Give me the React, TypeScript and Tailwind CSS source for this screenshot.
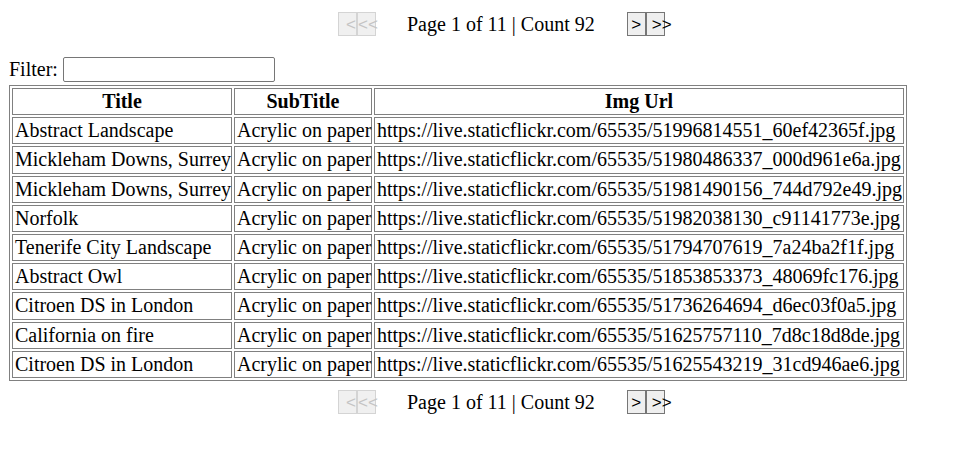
const rows = [
  ['Abstract Landscape', 'Acrylic on paper', 'https://live.staticflickr.com/65535/51996814551_60ef42365f.jpg'],
  ['Mickleham Downs, Surrey', 'Acrylic on paper', 'https://live.staticflickr.com/65535/51980486337_000d961e6a.jpg'],
  ['Mickleham Downs, Surrey', 'Acrylic on paper', 'https://live.staticflickr.com/65535/51981490156_744d792e49.jpg'],
  ['Norfolk', 'Acrylic on paper', 'https://live.staticflickr.com/65535/51982038130_c91141773e.jpg'],
  ['Tenerife City Landscape', 'Acrylic on paper', 'https://live.staticflickr.com/65535/51794707619_7a24ba2f1f.jpg'],
  ['Abstract Owl', 'Acrylic on paper', 'https://live.staticflickr.com/65535/51853853373_48069fc176.jpg'],
  ['Citroen DS in London', 'Acrylic on paper', 'https://live.staticflickr.com/65535/51736264694_d6ec03f0a5.jpg'],
  ['California on fire', 'Acrylic on paper', 'https://live.staticflickr.com/65535/51625757110_7d8c18d8de.jpg'],
  ['Citroen DS in London', 'Acrylic on paper', 'https://live.staticflickr.com/65535/51625543219_31cd946ae6.jpg'],
];

function Pager() {
  return (
    <div className="flex items-center h-[24px] ml-[338px]">
      <button disabled className="w-[19px] h-[24px] border border-[#d4d4d4] bg-[#f0f0f0] text-[#c4c4c4] font-['Liberation_Sans',_sans-serif] text-[17px] leading-none text-left pl-[7px] whitespace-nowrap">
        &lt;
      </button>
      <button disabled className="w-[19px] h-[24px] border border-[#d4d4d4] bg-[#f0f0f0] text-[#c4c4c4] font-['Liberation_Sans',_sans-serif] text-[17px] leading-none text-left pl-0 overflow-visible whitespace-nowrap">
        &lt;&lt;
      </button>
      <span className="ml-[31px] mr-[32px] text-[20px] leading-[23px] text-black">Page 1 of 11 | Count 92</span>
      <button className="w-[19px] h-[24px] border border-[#767676] bg-[#efefef] text-black font-['Liberation_Sans',_sans-serif] text-[17px] leading-none text-center whitespace-nowrap">
        &gt;
      </button>
      <button className="w-[19px] h-[24px] border border-[#767676] bg-[#efefef] text-black font-['Liberation_Sans',_sans-serif] text-[17px] leading-none text-left pl-[5px] overflow-visible whitespace-nowrap">
        &gt;&gt;
      </button>
    </div>
  );
}

export default function App() {
  return (
    <div className="w-[953px] h-[456px] bg-white text-black font-['Liberation_Serif',_serif]">
      <div className="pt-[12px]">
        <Pager />
      </div>

      <div className="flex items-center mt-[21px] ml-[9px]">
        <span className="text-[20px] leading-[23px]">Filter:</span>
        <input type="text" className="ml-[5px] w-[212px] h-[25px] border border-[#767676] rounded-[2px] bg-white outline-none" />
      </div>

      <table className="ml-[9px] mt-[3px] border border-[#808080] border-separate border-spacing-[2px] text-[20px] leading-[23.2px] table-fixed w-[898px]">
        <colgroup>
          <col className="w-[220px]" />
          <col className="w-[138px]" />
          <col className="w-[530px]" />
        </colgroup>
        <thead>
          <tr>
            <th className="border border-[#808080] px-[2px] py-[1px] text-center font-bold">Title</th>
            <th className="border border-[#808080] px-[2px] py-[1px] text-center font-bold">SubTitle</th>
            <th className="border border-[#808080] px-[2px] py-[1px] text-center font-bold">Img Url</th>
          </tr>
        </thead>
        <tbody>
          {rows.map((r, i) => (
            <tr key={i}>
              <td className="border border-[#808080] px-[2px] py-[1px] whitespace-nowrap">{r[0]}</td>
              <td className="border border-[#808080] px-[2px] py-[1px] whitespace-nowrap">{r[1]}</td>
              <td className="border border-[#808080] px-[2px] py-[1px] whitespace-nowrap">{r[2]}</td>
            </tr>
          ))}
        </tbody>
      </table>

      <div className="mt-[9px]">
        <Pager />
      </div>
    </div>
  );
}
